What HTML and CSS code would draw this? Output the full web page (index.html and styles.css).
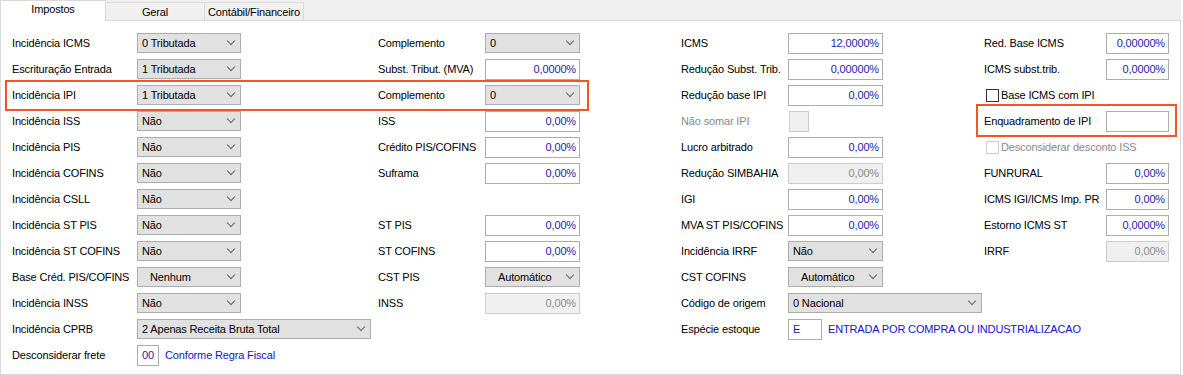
FILE: index.html
```html
<!DOCTYPE html>
<html lang="pt-BR">
<head>
    <meta charset="UTF-8">
    <title>Impostos</title>
    <link rel="stylesheet" href="styles.css">
</head>
<body>

    <div class="window">
        <div class="tabs">
            <div class="tab active">Impostos</div>
            <div class="tab">Geral</div>
            <div class="tab">Contábil/Financeiro</div>
        </div>

        <div class="panel">
            <!-- coluna 1 -->
            <div class="col col1">
                <label>Incidência ICMS</label>
                <div class="select w104">0 Tributada</div>
                <label>Escrituração Entrada</label>
                <div class="select w104">1 Tributada</div>
                <label>Incidência IPI</label>
                <div class="select w104">1 Tributada</div>
                <label>Incidência ISS</label>
                <div class="select w104">Não</div>
                <label>Incidência PIS</label>
                <div class="select w104">Não</div>
                <label>Incidência COFINS</label>
                <div class="select w104">Não</div>
                <label>Incidência CSLL</label>
                <div class="select w104">Não</div>
                <label>Incidência ST PIS</label>
                <div class="select w104">Não</div>
                <label>Incidência ST COFINS</label>
                <div class="select w104">Não</div>
                <label>Base Créd. PIS/COFINS</label>
                <div class="select w104 pad">Nenhum</div>
                <label>Incidência INSS</label>
                <div class="select w104">Não</div>
                <label>Incidência CPRB</label>
                <div class="select w234">2 Apenas Receita Bruta Total</div>
                <label>Desconsiderar frete</label>
                <div class="pair">
                    <div class="input code w22">00</div>
                    <span class="link">Conforme Regra Fiscal</span>
                </div>
            </div>

            <!-- coluna 2 -->
            <div class="col col2">
                <label>Complemento</label>
                <div class="select w95">0</div>
                <label>Subst. Tribut. (MVA)</label>
                <div class="input w95">0,0000%</div>
                <label>Complemento</label>
                <div class="select w95">0</div>
                <label>ISS</label>
                <div class="input w95">0,00%</div>
                <label>Crédito PIS/COFINS</label>
                <div class="input w95">0,00%</div>
                <label>Suframa</label>
                <div class="input w95">0,00%</div>
                <div class="empty"></div>
                <label>ST PIS</label>
                <div class="input w95">0,00%</div>
                <label>ST COFINS</label>
                <div class="input w95">0,00%</div>
                <label>CST PIS</label>
                <div class="select w95 pad">Automático</div>
                <label>INSS</label>
                <div class="input w95 disabled">0,00%</div>
            </div>

            <!-- coluna 3 -->
            <div class="col col3">
                <label>ICMS</label>
                <div class="input w95">12,0000%</div>
                <label>Redução Subst. Trib.</label>
                <div class="input w95">0,00000%</div>
                <label>Redução base IPI</label>
                <div class="input w95">0,00%</div>
                <label class="muted">Não somar IPI</label>
                <div class="input disabled w20"></div>
                <label>Lucro arbitrado</label>
                <div class="input w95">0,00%</div>
                <label>Redução SIMBAHIA</label>
                <div class="input w95 disabled">0,00%</div>
                <label>IGI</label>
                <div class="input w95">0,00%</div>
                <label>MVA ST PIS/COFINS</label>
                <div class="input w95">0,00%</div>
                <label>Incidência IRRF</label>
                <div class="select w95">Não</div>
                <label>CST COFINS</label>
                <div class="select w95 pad">Automático</div>
                <label>Código de origem</label>
                <div class="select w194">0 Nacional</div>
                <label>Espécie estoque</label>
                <div class="pair">
                    <div class="input code w34">E</div>
                    <span class="link">ENTRADA POR COMPRA OU INDUSTRIALIZACAO</span>
                </div>
            </div>

            <!-- coluna 4 -->
            <div class="col col4">
                <label>Red. Base ICMS</label>
                <div class="input w63">0,00000%</div>
                <label>ICMS subst.trib.</label>
                <div class="input w63">0,0000%</div>
                <div class="check"><span class="box"></span>Base ICMS com IPI</div>
                <label>Enquadramento de IPI</label>
                <div class="input w63"></div>
                <div class="check off"><span class="box"></span>Desconsiderar desconto ISS</div>
                <label>FUNRURAL</label>
                <div class="input w63">0,00%</div>
                <label>ICMS IGI/ICMS Imp. PR</label>
                <div class="input w63">0,00%</div>
                <label>Estorno ICMS ST</label>
                <div class="input w63">0,0000%</div>
                <label>IRRF</label>
                <div class="input w63 disabled">0,00%</div>
            </div>

            <div class="mark mark-ipi"></div>
            <div class="mark mark-enq"></div>
        </div>
    </div>

</body>
</html>
```

FILE: styles.css
```css
body {
    margin: 0;
    background: #ffffff;
    font-family: "Liberation Sans", Arial, sans-serif;
    font-size: 11px;
    letter-spacing: -0.15px;
    color: #000;
}

.window {
    width: 1181px;
}

/* Tabs */
.tabs {
    display: flex;
    align-items: flex-end;
    height: 20px;
    background: #f0f0f0;
    border-bottom: 1px solid #d9d9d9;
}

.tab {
    box-sizing: border-box;
    width: 100px;
    height: 18px;
    margin-left: -1px;
    border: 1px solid #d9d9d9;
    border-bottom: none;
    background: #f0f0f0;
    text-align: center;
    line-height: 18px;
}

.tab.active {
    width: 106px;
    height: 21px;
    margin-left: 0;
    margin-bottom: -1px;
    background: #fff;
    line-height: 17px;
    position: relative;
    z-index: 1;
}

/* Panel */
.panel {
    position: relative;
    height: 354px;
    box-sizing: border-box;
    padding: 9px 0 0 11px;
    border: 1px solid #d9d9d9;
    border-top: none;
    display: grid;
    grid-template-columns: 366px 303px 303px 1fr;
}

.col {
    display: grid;
    grid-auto-rows: 26px;
    align-items: center;
    align-content: start;
}

.col1 { grid-template-columns: 125px auto; }
.col2 { grid-template-columns: 107px auto; }
.col3 { grid-template-columns: 107px auto; }
.col4 { grid-template-columns: 122px auto; }

label {
    white-space: nowrap;
}

.muted {
    color: #8a8a8a;
}

.empty {
    grid-column: 1 / -1;
}

/* Controls */
.select,
.input {
    box-sizing: border-box;
    border: 1px solid #adadad;
    white-space: nowrap;
}

.select {
    height: 20px;
    background: #e1e1e1;
    padding: 0 5px 0 4px;
    display: flex;
    align-items: center;
    justify-content: space-between;
}

.select::after {
    content: "";
    width: 5px;
    height: 5px;
    margin-top: -4px;
    margin-right: 1px;
    border-right: 1px solid #666;
    border-bottom: 1px solid #666;
    transform: rotate(45deg);
}

.select.pad {
    padding-left: 12px;
}

.input {
    height: 21px;
    background: #fff;
    color: #1c1caa;
    text-align: right;
    line-height: 19px;
    padding-right: 3px;
}

.input.disabled {
    background: #f0f0f0;
    border-color: #cccccc;
    color: #8a8a8a;
}

.input.code {
    text-align: left;
    padding-left: 4px;
}

.w20 { width: 20px; margin-left: 1px; }
.w22 { width: 22px; }
.w34 { width: 34px; }
.w63 { width: 63px; }
.w95 { width: 95px; }
.w104 { width: 104px; }
.w194 { width: 194px; }
.w234 { width: 234px; }

.pair {
    display: flex;
    align-items: center;
    gap: 6px;
    white-space: nowrap;
}

.link {
    color: #1414c8;
}

/* Checkboxes */
.check {
    grid-column: 1 / -1;
    display: flex;
    align-items: center;
    gap: 2px;
    margin-left: 2px;
    white-space: nowrap;
}

.check .box {
    box-sizing: border-box;
    width: 13px;
    height: 13px;
    border: 1px solid #333;
    background: #fff;
}

.check.off {
    color: #8a8a8a;
}

.check.off .box {
    border-color: #cccccc;
}

/* Destaques em laranja */
.mark {
    position: absolute;
    box-sizing: border-box;
    border: 2px solid #f4561f;
}

.mark-ipi {
    left: 4px;
    top: 59px;
    width: 584px;
    height: 31px;
}

.mark-enq {
    left: 975px;
    top: 83px;
    width: 201px;
    height: 33px;
}
```
